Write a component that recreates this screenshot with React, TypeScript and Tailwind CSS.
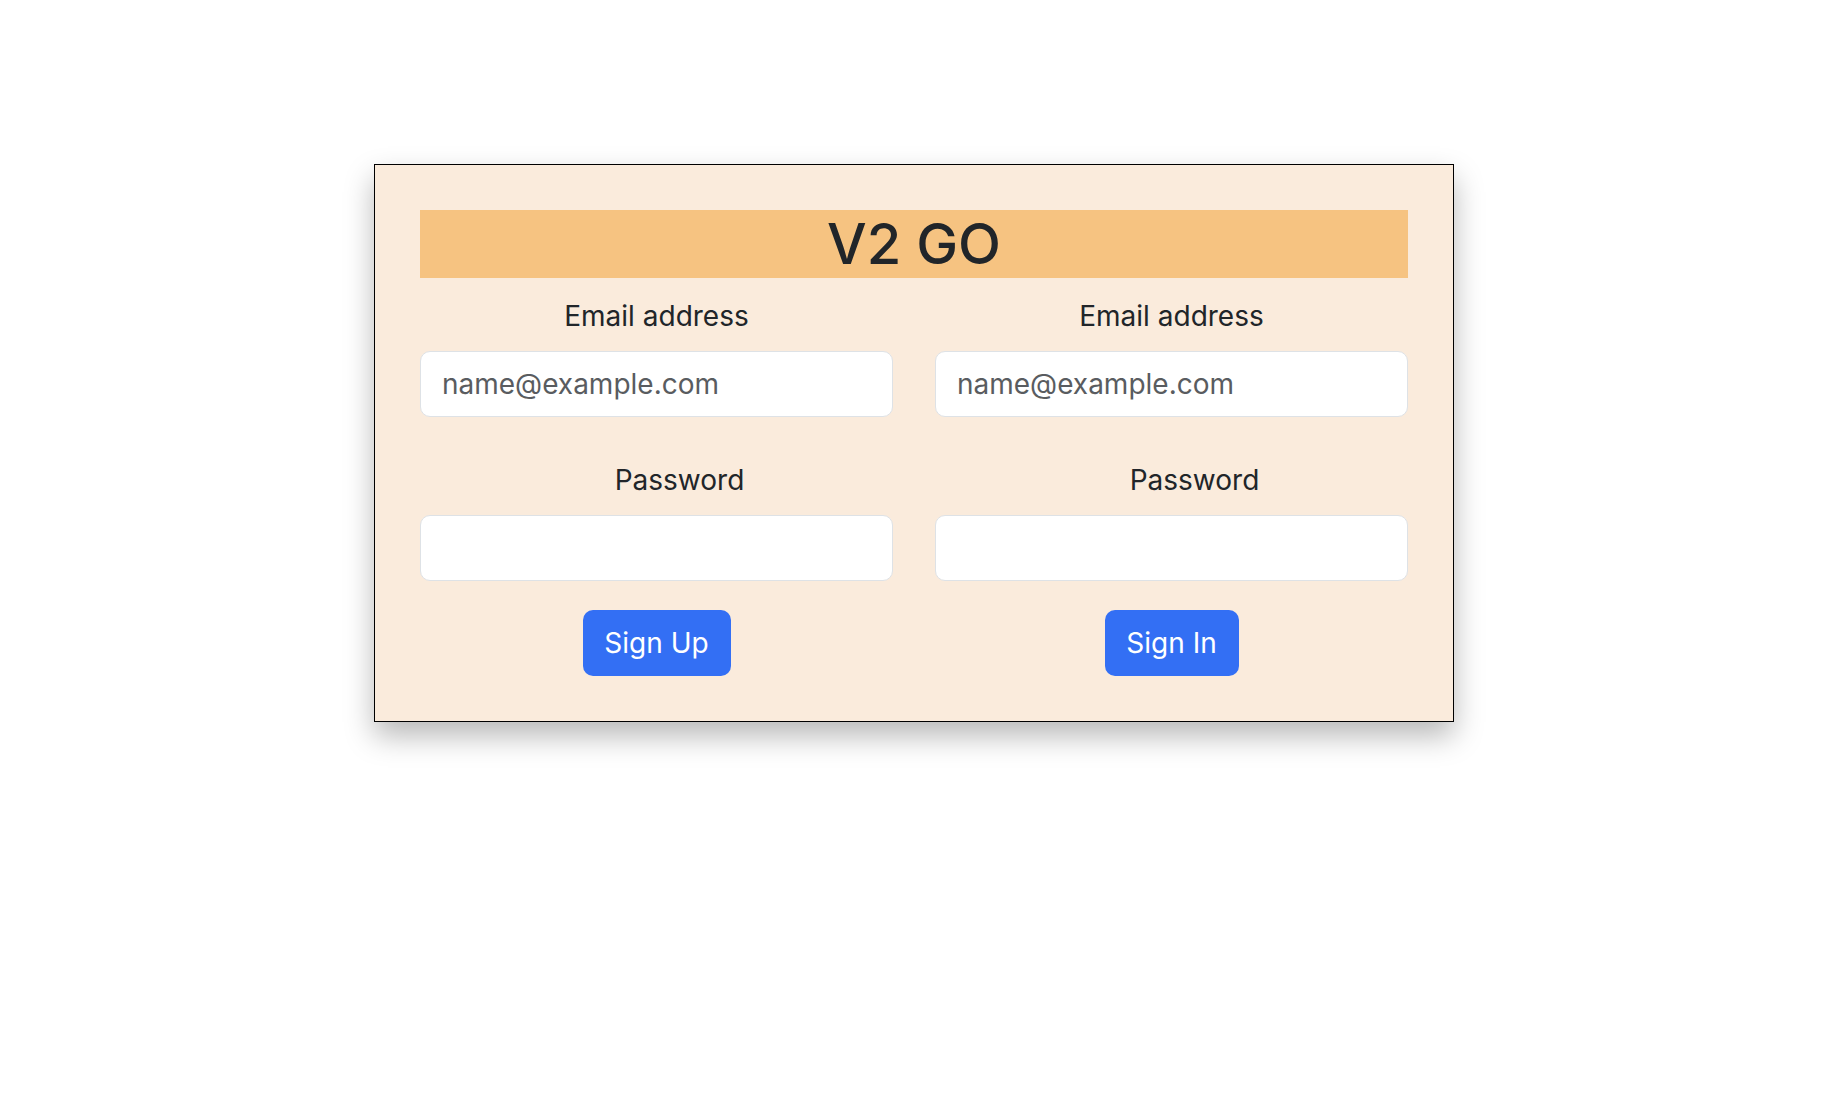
import React from 'react';

const Field: React.FC<{ label: string; placeholder?: string; type?: string; shift?: boolean; last?: boolean }> = ({
  label,
  placeholder,
  type = 'text',
  shift,
  last,
}) => (
  <div className={last ? 'mb-[29px]' : 'mb-[42px]'}>
    <label className={`block text-center text-[28px] leading-[42px] mb-[14px] ${shift ? 'pl-[46px]' : ''}`}>
      {label}
    </label>
    <input
      type={type}
      placeholder={placeholder}
      className="block w-full h-[66px] px-[21px] text-[28px] bg-white border border-[#dee2e6] rounded-[10px] text-[#212529] placeholder:text-[#595c60] outline-none"
    />
  </div>
);

const Column: React.FC<{ button: string; btnWidth: string }> = ({ button, btnWidth }) => (
  <div className="flex flex-col">
    <Field label="Email address" placeholder="name@example.com" type="email" />
    <Field label="Password" type="password" shift last />
    <div className="flex justify-center">
      <button
        className={`h-[66px] ${btnWidth} rounded-[10px] bg-[#336ff4] text-white text-[28px] leading-none`}
      >
        {button}
      </button>
    </div>
  </div>
);

export default function App() {
  return (
    <div className="min-h-screen bg-white text-[#212529] font-['Inter','Liberation_Sans',sans-serif] pt-[164px]">
      <div className="ml-[374px] w-[1080px] border border-black bg-[#faebdc] p-[45px] shadow-[0_14px_28px_rgba(0,0,0,0.28)]">
        <h1 className="bg-[#f6c381] text-center text-[56px] leading-[68px] font-medium mb-[17px]">V2 GO</h1>
        <div className="grid grid-cols-2 gap-x-[42px]">
          <Column button="Sign Up" btnWidth="w-[148px]" />
          <Column button="Sign In" btnWidth="w-[134px]" />
        </div>
      </div>
    </div>
  );
}
